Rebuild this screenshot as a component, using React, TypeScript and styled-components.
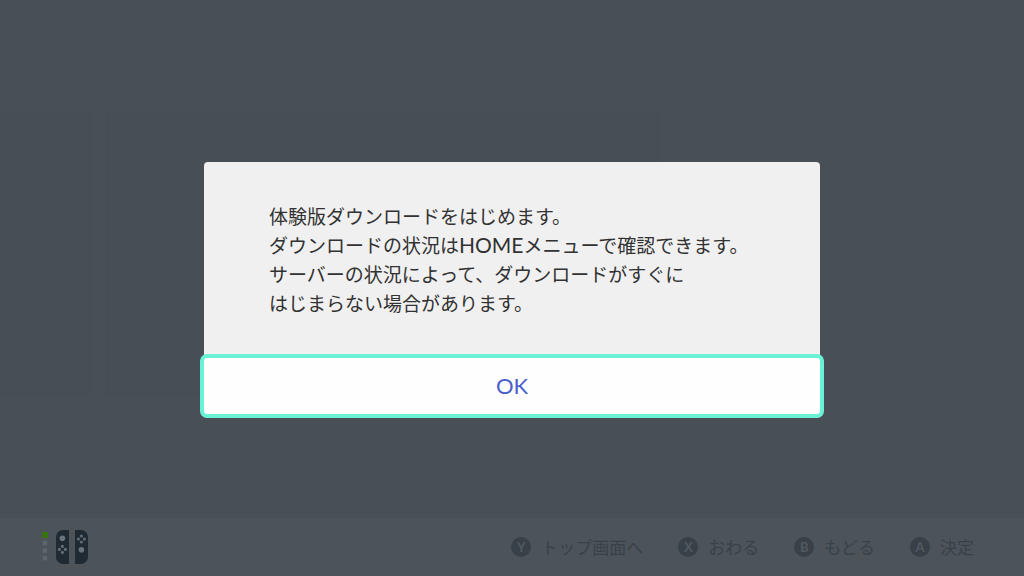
import React from "react";
import styled, { createGlobalStyle } from "styled-components";

const GlobalStyle = createGlobalStyle`
  *, *::before, *::after { box-sizing: border-box; }
  body {
    margin: 0;
    background: #485056;
    font-family: "Noto Sans CJK JP", sans-serif;
  }
`;

const Screen = styled.div`
  display: flex;
  flex-direction: column;
  min-height: 100vh;
`;

const Store = styled.main`
  flex: 1;
  padding-top: 112px;
`;

const Shelf = styled.div`
  display: flex;
  gap: 14px;
`;

const Tile = styled.div<{ $share: string }>`
  flex: 0 0 ${(p) => p.$share};
  height: 284px;
  background: #474f55;
  border: 1px solid #464e54;
`;

const Footer = styled.footer`
  display: flex;
  align-items: center;
  justify-content: space-between;
  min-height: 58px;
  padding: 0 50px 0 40px;
  background: #4c545a;
`;

const Controller = styled.svg`
  display: block;
  width: 50px;
  height: 36px;
`;

const Hints = styled.nav`
  display: flex;
  align-items: center;
  gap: 35px;
`;

const Hint = styled.button`
  display: flex;
  align-items: center;
  gap: 10px;
  padding: 0;
  border: 0;
  background: none;
  color: #384148;
  font: 400 17px/24px "Noto Sans CJK JP", sans-serif;
`;

const Key = styled.span`
  display: grid;
  place-items: center;
  width: 20px;
  height: 20px;
  border-radius: 50%;
  background: #384148;
  color: #515960;
  font: 700 13px/20px Lato, sans-serif;
`;

const Overlay = styled.div`
  position: fixed;
  inset: 0;
  display: flex;
  align-items: center;
  justify-content: center;
  padding-top: 4px;
`;

const Dialog = styled.section`
  display: flex;
  flex-direction: column;
  flex: 0 1 616px;
  border-radius: 4px;
  background: #f0f0f0;
`;

const Message = styled.p`
  margin: 0;
  padding: 40px 65px 36px;
  color: #323232;
  font: 400 19px/29px Lato, "Noto Sans CJK JP", sans-serif;
`;

const Latin = styled.span`
  font-size: 21px;
  line-height: 20px;
`;

const Confirm = styled.button`
  height: 64px;
  margin: 0 -4px;
  padding: 0;
  border: 4px solid #69f2d6;
  border-radius: 7px;
  outline: none;
  background: #fefefe;
  color: #4a5fcb;
  font: 400 22px/32px Lato, sans-serif;
`;

const hints = [
  { key: "Y", label: "トップ画面へ" },
  { key: "X", label: "おわる" },
  { key: "B", label: "もどる" },
  { key: "A", label: "決定" },
];

function FaceButtons({ x, y }: { x: number; y: number }) {
  return (
    <g fill="#626c74">
      <circle cx={x} cy={y - 3} r="1.6" />
      <circle cx={x} cy={y + 3} r="1.6" />
      <circle cx={x - 3} cy={y} r="1.6" />
      <circle cx={x + 3} cy={y} r="1.6" />
    </g>
  );
}

function ControllerIcon() {
  return (
    <Controller viewBox="0 0 50 36" role="img" aria-label="コントローラー 1">
      <rect x="2" y="3" width="6" height="6" fill="#37730f" />
      <g fill="#5c666f">
        <rect x="2.7" y="11.8" width="4.4" height="4.4" />
        <rect x="2.7" y="19.4" width="4.4" height="4.4" />
        <rect x="2.7" y="27" width="4.4" height="4.4" />
      </g>
      <path d="M29 1v34h-6a7 7 0 0 1-7-7V8a7 7 0 0 1 7-7z" fill="#202a33" />
      <path d="M35 1v34h6a7 7 0 0 0 7-7V8a7 7 0 0 0-7-7z" fill="#202a33" />
      <circle cx="22.4" cy="9.3" r="2.8" fill="#69737b" />
      <FaceButtons x={22.4} y={20.4} />
      <FaceButtons x={41.4} y={10} />
      <circle cx="41.4" cy="20.8" r="2.8" fill="#69737b" />
    </Controller>
  );
}

export default function App() {
  return (
    <>
      <GlobalStyle />
      <Screen>
        <Store>
          <Shelf>
            <Tile $share="9%" />
            <Tile $share="54%" />
          </Shelf>
        </Store>
        <Footer>
          <ControllerIcon />
          <Hints>
            {hints.map((hint) => (
              <Hint key={hint.key} type="button">
                <Key>{hint.key}</Key>
                {hint.label}
              </Hint>
            ))}
          </Hints>
        </Footer>
      </Screen>
      <Overlay>
        <Dialog role="dialog" aria-modal="true" aria-describedby="message">
          <Message id="message">
            体験版ダウンロードをはじめます。
            <br />
            ダウンロードの状況は<Latin>HOME</Latin>メニューで確認できます。
            <br />
            サーバーの状況によって、ダウンロードがすぐに
            <br />
            はじまらない場合があります。
          </Message>
          <Confirm type="button">OK</Confirm>
        </Dialog>
      </Overlay>
    </>
  );
}
